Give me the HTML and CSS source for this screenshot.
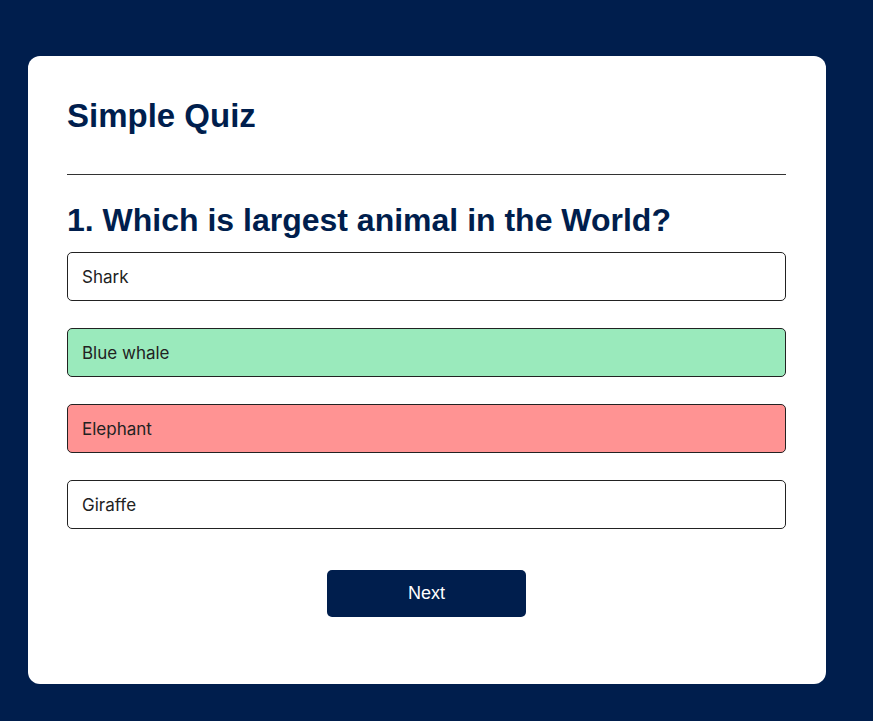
FILE: index.html
```html
<!DOCTYPE html>
<html lang="en">
<head>
<meta charset="utf-8">
<title>Simple Quiz</title>
<link rel="stylesheet" href="styles.css">
</head>
<body>
<div class="app">
  <h1 class="title">Simple Quiz</h1>
  <div class="quiz">
    <h2 class="question">1. Which is largest animal in the World?</h2>
    <div class="answers">
      <button class="btn">Shark</button>
      <button class="btn correct">Blue whale</button>
      <button class="btn incorrect">Elephant</button>
      <button class="btn">Giraffe</button>
    </div>
    <button class="next-btn">Next</button>
  </div>
</div>
</body>
</html>
```

FILE: styles.css
```css
* {
  box-sizing: border-box;
  margin: 0;
  padding: 0;
}

body {
  background: #001e4d;
  font-family: "Liberation Sans", Arial, sans-serif;
}

.app {
  background: #fff;
  width: 798px;
  margin: 56px 0 0 28px;
  border-radius: 12px;
  padding: 41px 40px 67px 39px;
}

.title {
  font-size: 33px;
  line-height: 38px;
  font-weight: 700;
  color: #001e4d;
  padding-bottom: 39px;
  border-bottom: 1px solid #333;
}

.quiz {
  display: flex;
  flex-direction: column;
}

.question {
  margin-top: 27px;
  font-size: 32px;
  line-height: 37px;
  font-weight: 700;
  color: #001e4d;
}

.answers {
  margin-top: 13px;
  display: flex;
  flex-direction: column;
  gap: 27px;
}

.btn {
  height: 49px;
  width: 100%;
  background: #fff;
  color: #222;
  border: 1px solid #222;
  border-radius: 5px;
  padding: 0 14px;
  text-align: left;
  font-family: "Inter", "Liberation Sans", sans-serif;
  font-size: 17px;
}

.btn.correct {
  background: #9aeabc;
}

.btn.incorrect {
  background: #ff9393;
}

.next-btn {
  align-self: center;
  margin-top: 41px;
  width: 199px;
  height: 47px;
  border: 0;
  border-radius: 5px;
  background: #001e4d;
  color: #fff;
  font-family: "Liberation Sans", Arial, sans-serif;
  font-size: 18px;
}
```
